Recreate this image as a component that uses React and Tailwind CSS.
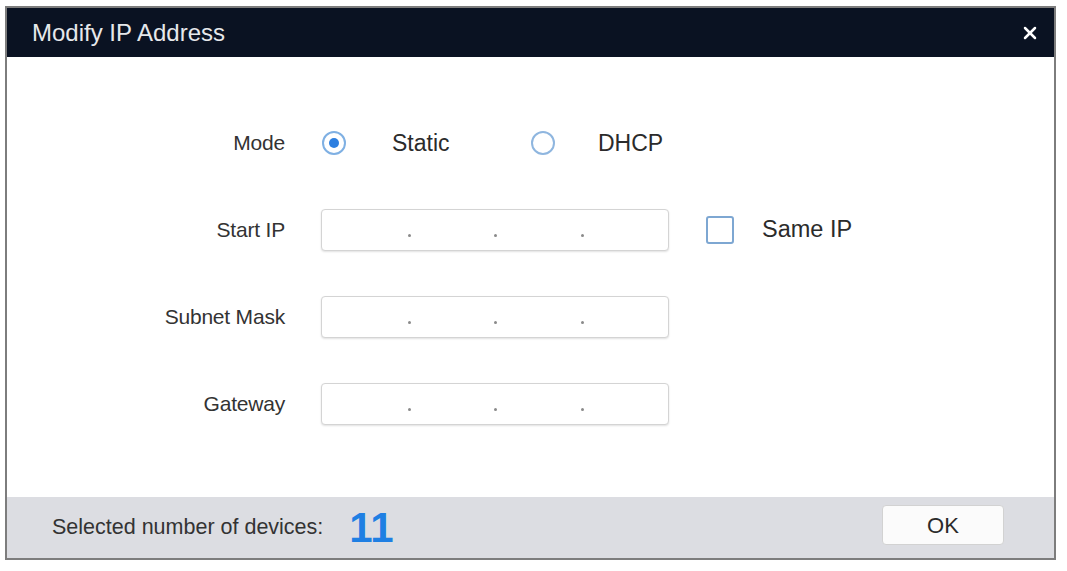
import { X } from "lucide-react";

const FONT = { fontFamily: '"Liberation Sans", Arial, sans-serif' };

function IpField() {
  // four octet boxes split by dots
  return (
    <div className="flex h-[42px] w-[348px] items-end rounded-[4px] border border-[#d4d4d4] bg-white pb-[13px] shadow-[0_1px_2px_rgba(0,0,0,0.12)]">
      {[0, 1, 2, 3].map((i) => (
        <div key={i} className="flex flex-1 justify-end">
          {i < 3 ? <span className="mr-[-2px] h-[3px] w-[3px] rounded-full bg-[#8a8a8a]" /> : null}
        </div>
      ))}
    </div>
  );
}

function Row({ label, children }) {
  return (
    <div className="flex h-[42px] items-center">
      <div className="w-[278px] text-right text-[21px] tracking-[-0.2px] text-[#333]">{label}</div>
      <div className="ml-[36px] flex items-center">{children}</div>
    </div>
  );
}

export default function App() {
  return (
    <div className="h-[571px] w-[1067px] bg-white pl-[5px] pt-[6px]" style={FONT}>
      <div className="flex h-[554px] w-[1051px] flex-col border-2 border-[#7d7d7d]">
        <div className="flex h-[49px] shrink-0 items-center justify-between bg-[#0a1222] pl-[25px] pr-[14px]">
          <span className="text-[24px] text-[#e6e8eb]">Modify IP Address</span>
          <X className="h-[20px] w-[20px] text-white" strokeWidth={3} />
        </div>

        <div className="flex flex-1 flex-col gap-[45px] bg-white pt-[65px]">
          <Row label="Mode">
            <div className="flex w-[210px] items-center">
              <span className="ml-px flex h-[24px] w-[24px] items-center justify-center rounded-full border-2 border-[#7fb0e3] bg-white">
                <span className="h-[10px] w-[10px] rounded-full bg-[#2d7fe0]" />
              </span>
              <span className="ml-[46px] text-[23px] text-[#2b2b2b]">Static</span>
            </div>
            <span className="h-[24px] w-[24px] rounded-full border-2 border-[#8fb6df] bg-white" />
            <span className="ml-[43px] text-[23px] text-[#2b2b2b]">DHCP</span>
          </Row>
          <Row label="Start IP">
            <IpField />
            <span className="ml-[37px] h-[28px] w-[28px] rounded-[3px] border-2 border-[#7ea7d2] bg-white" />
            <span className="ml-[28px] text-[23.5px] text-[#2b2b2b]">Same IP</span>
          </Row>
          <Row label="Subnet Mask">
            <IpField />
          </Row>
          <Row label="Gateway">
            <IpField />
          </Row>
        </div>

        <div className="flex h-[61px] shrink-0 items-center justify-between bg-[#dcdde2] pl-[45px] pr-[50px]">
          <div className="flex items-center">
            <span className="text-[21.5px] text-[#333]">Selected number of devices:</span>
            <span className="ml-[26px] text-[42px] font-bold leading-none text-[#1f7fe3]">11</span>
          </div>
          <button
            type="button"
            className="mb-[5px] h-[40px] w-[122px] rounded-[4px] border border-[#d2d2d2] bg-[#fbfbfb] text-[22px] text-[#2b2b2b]"
          >
            OK
          </button>
        </div>
      </div>
    </div>
  );
}
